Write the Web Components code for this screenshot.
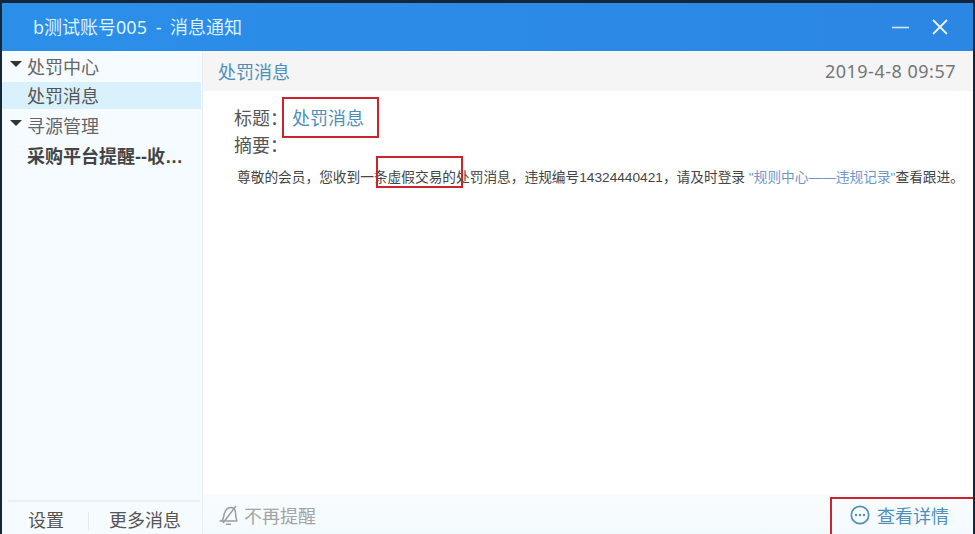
<!DOCTYPE html>
<html lang="zh">
<head>
<meta charset="utf-8">
<title>消息通知</title>
<style>
html, body { margin: 0; height: 100%; background: #16263a; overflow: hidden; }
body { font: 18px "Liberation Sans", "Noto Sans CJK SC", sans-serif; color: #555; }
</style>
</head>
<body>
<notice-window>
    <title-bar slot="top">b测试账号005 - 消息通知</title-bar>
    <side-nav slot="side">
        <nav-row caret>处罚中心</nav-row>
        <nav-row active>处罚消息</nav-row>
        <nav-row caret>寻源管理</nav-row>
        <nav-row strong>采购平台提醒--收到消息</nav-row>
    </side-nav>
    <message-pane slot="main"></message-pane>
</notice-window>

<script>
class NoticeWindow extends HTMLElement {
    constructor(){
        super()
        this.attachShadow({mode: 'open'})
        this.shadowRoot.innerHTML = `
        <style>
        :host{
            display: grid;
            grid-template-columns: 201px 1fr;
            grid-template-rows: 48px 1fr;
            width: 971px;
            height: 531px;
            margin: 3px 0 0 2px;
            background: #fff;
        }
        .top{ grid-column: 1 / 3; }
        </style>
        <div class="top"><slot name="top"></slot></div>
        <slot name="side"></slot>
        <slot name="main"></slot>`
    }
}

class TitleBar extends HTMLElement {
    constructor(){
        super()
        this.attachShadow({mode: 'open'})
        this.shadowRoot.innerHTML = `
        <style>
        :host{
            display: flex;
            align-items: center;
            height: 48px;
            padding: 0 24px 0 31px;
            box-sizing: border-box;
            background: linear-gradient(90deg, #2b8fe8, #2c86e4);
            color: #dff1ff;
            font-family: "Noto Sans", "Noto Sans CJK SC", sans-serif;
            font-size: 18px;
            word-spacing: 4px;
        }
        .name{ flex: 1; margin-top: -2px; }
        svg{ display: block; }
        .min{ margin: 0 22px 0 0; }
        </style>
        <span class="name"><slot></slot></span>
        <svg class="min" width="17" height="16" viewBox="0 0 17 16"><path d="M0 8.500h17" stroke="#cfe9fb" stroke-width="1.6"/></svg>
        <svg width="18" height="18" viewBox="0 0 18 18"><path d="M2 2l14 14M16 2L2 16" stroke="#e6f5ff" stroke-width="1.8"/></svg>`
    }
}

class SideNav extends HTMLElement {
    constructor(){
        super()
        this.attachShadow({mode: 'open'})
        this.shadowRoot.innerHTML = `
        <style>
        :host{
            display: flex;
            flex-direction: column;
            height: 483px;
            background: #f5fbff;
            border-right: 1px solid #e6eef3;
            box-sizing: border-box;
        }
        .list{ flex: 1; min-width: 0; }
        .foot{
            display: flex;
            align-items: center;
            height: 27px;
            margin: 0 2px 0 6px;
            padding-top: 5px;
            border-top: 2px solid #e9f1f6;
            font-size: 18px;
            line-height: 22px;
            color: #555;
        }
        .foot span{ padding-left: 20px; }
        .foot span + span{ margin-left: 24px; padding-left: 20px; border-left: 1px solid #e4e9ec; line-height: 18px; }
        </style>
        <div class="list"><slot></slot></div>
        <div class="foot"><span>设置</span><span>更多消息</span></div>`
    }
}

class NavRow extends HTMLElement {
    constructor(){
        super()
        this.attachShadow({mode: 'open'})
        this.shadowRoot.innerHTML = `
        <style>
        :host{
            display: flex;
            align-items: center;
            height: 30px;
            margin-right: 1px;
            padding-left: 25px;
            position: relative;
            font-size: 18px;
            line-height: 24px;
            color: #666;
        }
        :host([active]){ height: 27px; margin: 1px 1px 1px 0; background: #d9f1fd; color: #555; }
        :host([strong]){ font-weight: bold; color: #444; }
        .label{ display: block; width: 162px; padding-top: 3px; white-space: nowrap; overflow: hidden; text-overflow: ellipsis; }
        .caret{
            display: none;
            position: absolute;
            left: 8px;
            top: 10px;
            border: 6px solid transparent;
            border-top: 6px solid #333;
            border-bottom: 0;
        }
        :host([caret]) .caret{ display: block; }
        </style>
        <i class="caret"></i><span class="label"><slot></slot></span>`
    }
}

class RedMark extends HTMLElement {
    constructor(){
        super()
        this.attachShadow({mode: 'open'})
        this.shadowRoot.innerHTML = `
        <style>
        :host{
            position: absolute;
            box-sizing: border-box;
            border: 2px solid #c9252f;
            pointer-events: none;
        }
        </style>`
    }
}

class MessagePane extends HTMLElement {
    constructor(){
        super()
        this.attachShadow({mode: 'open'})
        this.shadowRoot.innerHTML = `
        <style>
        :host{
            display: flex;
            flex-direction: column;
            position: relative;
            height: 483px;
            background: #fff;
            overflow: hidden;
        }
        .head{
            display: flex;
            justify-content: space-between;
            align-items: center;
            height: 40px;
            padding: 0 17px 0 15px;
            background: #f5f5f5;
            flex: none;
        }
        .head b{ font-weight: normal; font-size: 18px; color: #4f8fbb; }
        .head time{ font-family: "Noto Sans", sans-serif; font-size: 18px; color: #757575; letter-spacing: .5px; }
        .body{ flex: 1; padding: 14px 0 0 31px; }
        .line{ display: flex; align-items: center; height: 28px; font-size: 18px; line-height: 22px; color: #555; }
        .line span{ margin-left: 4px; color: #4f8fbb; }
        .line + .line{ height: 26px; }
        p{
            margin: 7px 0 0 3px;
            font-size: 13.7px;
            line-height: 24px;
            color: #444;
            white-space: nowrap;
        }
        p a{ color: #6f96cc; }
        .foot{
            display: flex;
            align-items: center;
            justify-content: space-between;
            box-sizing: border-box;
            height: 40px;
            padding: 2px 24px 0 15px;
            background: linear-gradient(#f9fcfe, #f3fafe);
            flex: none;
        }
        .mute{ display: flex; align-items: center; gap: 4px; font-size: 18px; color: #a4a4a4; }
        .more{ display: flex; align-items: center; gap: 7px; font-size: 18px; color: #4f8fbb; }
        svg{ display: block; }
        red-mark.title{ left: 79px; top: 46px; width: 97px; height: 41px; }
        red-mark.fake{ left: 173px; top: 105px; width: 87px; height: 32px; }
        red-mark.detail{ left: 627px; top: 446px; width: 147px; height: 41px; }
        </style>
        <div class="head"><b>处罚消息</b><time>2019-4-8 09:57</time></div>
        <div class="body">
            <div class="line">标题&#xFF1A;<span>处罚消息</span></div>
            <div class="line">摘要&#xFF1A;</div>
            <p>尊敬的会员&#xFF0C;您收到一条虚假交易的处罚消息&#xFF0C;违规编号14324440421&#xFF0C;请及时登录 <a>"规则中心&#x2014;&#x2014;违规记录"</a>查看跟进。</p>
        </div>
        <div class="foot">
            <div class="mute">
                <svg width="22" height="20" viewBox="0 0 22 20" fill="none" stroke="#9c9c9c" stroke-width="1.5"><path d="M1.500 16h18M4 16c2-3 1.500-5 2.500-8 1-3 3.500-5.500 6.500-5.500s4.500 2.500 4.500 5.500c0 3 .5 5 1.500 8"/><path d="M8 19.200h5M18 1L5 18"/></svg>
                不再提醒
            </div>
            <div class="more">
                <svg width="20" height="20" viewBox="0 0 20 20" fill="none"><circle cx="10" cy="10" r="8.700" stroke="#4f8fbb" stroke-width="1.700"/><circle cx="6" cy="10" r="1.200" fill="#4f8fbb"/><circle cx="10" cy="10" r="1.200" fill="#4f8fbb"/><circle cx="14" cy="10" r="1.200" fill="#4f8fbb"/></svg>
                查看详情
            </div>
        </div>
        <red-mark class="title"></red-mark>
        <red-mark class="fake"></red-mark>
        <red-mark class="detail"></red-mark>`
    }
}

customElements.define('notice-window', NoticeWindow)
customElements.define('title-bar', TitleBar)
customElements.define('side-nav', SideNav)
customElements.define('nav-row', NavRow)
customElements.define('red-mark', RedMark)
customElements.define('message-pane', MessagePane)
</script>
</body>
</html>
